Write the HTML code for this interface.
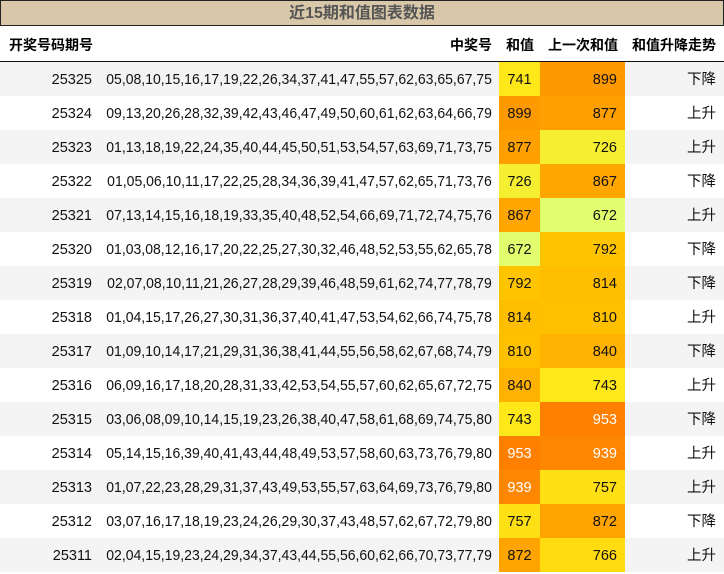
<!DOCTYPE html>
<html><head><meta charset="utf-8"><style>
body{margin:0;width:724px;height:573px;overflow:hidden;background:#fff;font-family:"Liberation Sans","Noto Sans CJK SC",sans-serif;}
.t{position:absolute;left:0;top:0;width:722px;height:24px;background:#d8c7a9;border:1px solid #222;text-align:center;font-weight:bold;font-size:16px;line-height:26px;color:#555;}
.h{position:absolute;top:26px;left:0;width:724px;height:35px;border-bottom:2px solid #111;font-weight:bold;font-size:14px;line-height:38px;}
.r{position:absolute;left:0;width:724px;height:34px;font-size:14.5px;color:#111;}
.c{position:absolute;top:0;height:34px;line-height:36px;white-space:nowrap;display:block;}
.a{left:0;width:92px;text-align:right}
.b{left:99px;width:393px;}
.b i{font-style:normal;position:absolute;right:0;top:0;height:34px;line-height:36px;font-size:15px;transform:scaleX(0.934);transform-origin:right center}
.s{left:499px;width:41px;text-align:center}
.p{left:540px;width:77px;padding-right:8px;text-align:right}
.d{left:625px;width:91px;text-align:right}
.w{color:#fff}
</style></head><body>
<div class="t">近15期和值图表数据</div>
<div class="h"><span class="c" style="left:9px;line-height:38px;height:35px">开奖号码期号</span><span class="c" style="left:450px;line-height:38px;height:35px">中奖号</span><span class="c" style="left:506px;line-height:38px;height:35px">和值</span><span class="c" style="left:548px;line-height:38px;height:35px">上一次和值</span><span class="c" style="left:632px;line-height:38px;height:35px">和值升降走势</span></div>
<div id="rows"></div>
<script>
var d=[["25325","05,08,10,15,16,17,19,22,26,34,37,41,47,55,57,62,63,65,67,75",741,899,"下降"],
["25324","09,13,20,26,28,32,39,42,43,46,47,49,50,60,61,62,63,64,66,79",899,877,"上升"],
["25323","01,13,18,19,22,24,35,40,44,45,50,51,53,54,57,63,69,71,73,75",877,726,"上升"],
["25322","01,05,06,10,11,17,22,25,28,34,36,39,41,47,57,62,65,71,73,76",726,867,"下降"],
["25321","07,13,14,15,16,18,19,33,35,40,48,52,54,66,69,71,72,74,75,76",867,672,"上升"],
["25320","01,03,08,12,16,17,20,22,25,27,30,32,46,48,52,53,55,62,65,78",672,792,"下降"],
["25319","02,07,08,10,11,21,26,27,28,29,39,46,48,59,61,62,74,77,78,79",792,814,"下降"],
["25318","01,04,15,17,26,27,30,31,36,37,40,41,47,53,54,62,66,74,75,78",814,810,"上升"],
["25317","01,09,10,14,17,21,29,31,36,38,41,44,55,56,58,62,67,68,74,79",810,840,"下降"],
["25316","06,09,16,17,18,20,28,31,33,42,53,54,55,57,60,62,65,67,72,75",840,743,"上升"],
["25315","03,06,08,09,10,14,15,19,23,26,38,40,47,58,61,68,69,74,75,80",743,953,"下降"],
["25314","05,14,15,16,39,40,41,43,44,48,49,53,57,58,60,63,73,76,79,80",953,939,"上升"],
["25313","01,07,22,23,28,29,31,37,43,49,53,55,57,63,64,69,73,76,79,80",939,757,"上升"],
["25312","03,07,16,17,18,19,23,24,26,29,30,37,43,48,57,62,67,72,79,80",757,872,"下降"],
["25311","02,04,15,19,23,24,29,34,37,43,44,55,56,60,62,66,70,73,77,79",872,766,"上升"]];
function col(v){var m={672:"#e2fd6e",726:"#f6ee30",741:"#ffe81a",743:"#ffe81a",757:"#ffe014",766:"#ffdb10",792:"#ffc400",810:"#ffc000",814:"#ffbe00",840:"#ffb200",867:"#ffa600",872:"#ffa400",877:"#ffa000",899:"#ff9900",939:"#ff8600",953:"#ff7f00"};return m[v];}
var h="";d.forEach(function(r,i){var bg=i%2?"#fff":"#f4f4f4";
h+='<div class="r" style="top:'+(62+i*34)+'px;background:'+bg+'"><span class="c a">'+r[0]+'</span><span class="c b"><i>'+r[1]+'</i></span><span class="c s'+(r[2]>900?' w':'')+'" style="background:'+col(r[2])+'">'+r[2]+'</span><span class="c p'+(r[3]>900?' w':'')+'" style="background:'+col(r[3])+'">'+r[3]+'</span><span class="c d">'+r[4]+'</span></div>';});
document.getElementById("rows").innerHTML=h;
</script>
</body></html>
